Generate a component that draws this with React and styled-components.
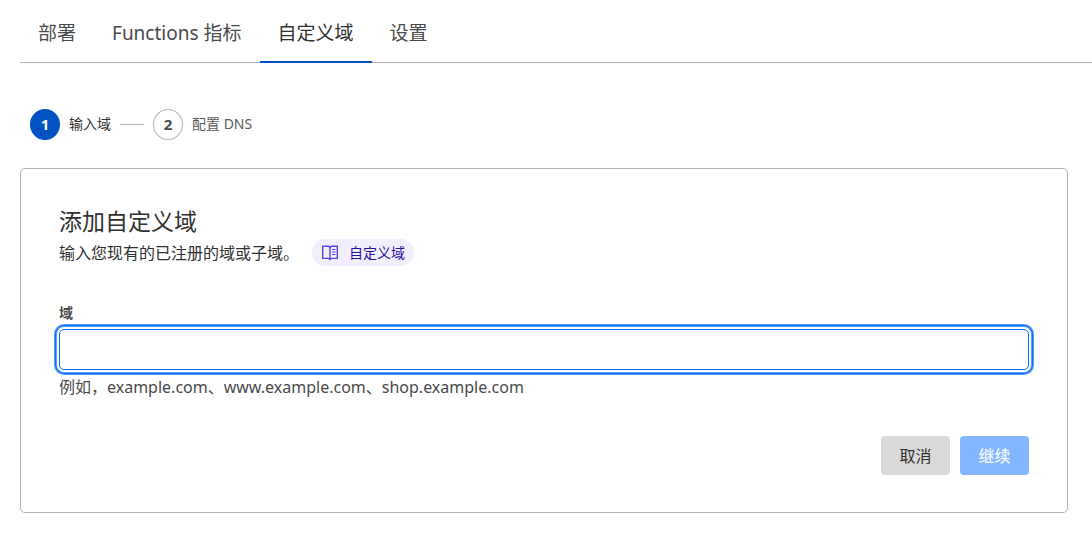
import React, { useState } from "react";
import styled, { createGlobalStyle } from "styled-components";

const GlobalStyle = createGlobalStyle`
  * {
    box-sizing: border-box;
  }
  body {
    margin: 0;
    background: #fff;
    color: #313131;
    font-family: "Noto Sans", "Noto Sans CJK SC", sans-serif;
    font-size: 16px;
    line-height: 24px;
  }
  button,
  input {
    font-family: inherit;
  }
`;

const Page = styled.div`
  padding-left: 20px;
`;

const Tabs = styled.nav`
  display: flex;
  height: 63px;
  border-bottom: 1px solid #b5b5b5;
`;

const Tab = styled.a`
  display: flex;
  align-items: center;
  height: 63px;
  padding: 4px 18px 0;
  border-bottom: 2px solid ${({ $active }) => ($active ? "#0051c3" : "transparent")};
  color: ${({ $active }) => ($active ? "#313131" : "#4a4a4a")};
  font-size: 19px;
  font-weight: 400;
  text-decoration: none;
  white-space: nowrap;
`;

const Content = styled.main`
  padding-right: 24px;
`;

const Steps = styled.ol`
  display: flex;
  align-items: center;
  margin: 46px 0 28px;
  padding: 0 10px;
  list-style: none;
`;

const Step = styled.li`
  display: flex;
  align-items: center;
  gap: 9px;
  color: ${({ $current }) => ($current ? "#313131" : "#595959")};
  font-size: 14px;

  &:not(:first-child)::before {
    content: "";
    width: 24px;
    height: 1px;
    margin-left: 9px;
    background: #b5b5b5;
  }
`;

const StepNumber = styled.span`
  display: flex;
  align-items: center;
  justify-content: center;
  width: 30px;
  height: 31px;
  padding-bottom: 2px;
  border: 1px solid ${({ $current }) => ($current ? "#0051c3" : "#b5b5b5")};
  border-radius: 50%;
  background: ${({ $current }) => ($current ? "#0051c3" : "#fff")};
  color: ${({ $current }) => ($current ? "#fff" : "#4a4a4a")};
  font-size: 15px;
  font-weight: 700;
`;

const StepName = styled.span`
  padding-bottom: 2px;
`;

const Card = styled.form`
  padding: 36px 38px 37px;
  border: 1px solid #b5b5b5;
  border-radius: 5px;
`;

const Title = styled.h1`
  margin: 0 0 2px;
  font-size: 23px;
  font-weight: 400;
  line-height: 32px;
`;

const Intro = styled.div`
  display: flex;
  align-items: center;
  gap: 13px;
`;

const Description = styled.p`
  margin: 0;
`;

const DocsLink = styled.a`
  display: flex;
  align-items: center;
  gap: 10px;
  height: 27px;
  padding: 0 9px;
  border-radius: 14px;
  background: #f1eefd;
  color: #2c0fa0;
  font-size: 14px;
  text-decoration: none;
`;

const Label = styled.label`
  display: block;
  margin-top: 37px;
  color: #4a4a4a;
  font-size: 14px;
  font-weight: 600;
  line-height: 20px;
`;

const TextInput = styled.input`
  display: block;
  width: 100%;
  height: 41px;
  margin: 6px 0 5px;
  padding: 0 10px;
  border: 1px solid #b5b5b5;
  border-radius: 5px;
  background: #fff;
  color: #313131;
  font-size: 16px;
  outline: none;
  caret-color: transparent;

  &:focus {
    border-color: #056dff;
    box-shadow: 0 0 0 2px #fff, 0 0 0 3px #5a9fff, 0 0 0 4px #056dff, 0 0 0 5px #5a9fff;
  }
`;

const Hint = styled.p`
  margin: 0;
  color: #4a4a4a;
`;

const Actions = styled.div`
  display: flex;
  justify-content: flex-end;
  gap: 10px;
  margin-top: 37px;
`;

const Button = styled.button`
  min-width: 69px;
  height: 39px;
  padding: 0 18px 2px;
  border: 0;
  border-radius: 4px;
  background: ${({ $primary }) => ($primary ? "#82b6ff" : "#d9d9d9")};
  color: ${({ $primary }) => ($primary ? "#f2f7ff" : "#313131")};
  font-size: 16px;
  font-weight: ${({ $primary }) => ($primary ? 500 : 400)};
  cursor: pointer;
`;

const BookIcon = () => (
  <svg width="18" height="16" viewBox="0 0 18 16" fill="none" stroke="#5a43e0" aria-hidden="true">
    <path d="M9 2.2C8.4 1.5 7.6 1.2 6.7 1.2H1.7v12.2h5c.9 0 1.7.2 2.3.9.6-.7 1.4-.9 2.3-.9h5V1.2h-5c-.9 0-1.7.3-2.3 1z" strokeWidth="1.4" />
    <path d="M9 2v12.5" strokeWidth="1.4" />
    <path d="M11 4.5h3.5M11 7h3.5M11 9.5h3.5" strokeWidth="1" />
  </svg>
);

const tabs = ["部署", "Functions 指标", "自定义域", "设置"];
const steps = ["输入域", "配置 DNS"];

const App = () => {
  const [domain, setDomain] = useState("");

  return (
    <Page>
      <GlobalStyle />
      <Tabs>
        {tabs.map((tab) => (
          <Tab key={tab} href="#" $active={tab === "自定义域"}>
            {tab}
          </Tab>
        ))}
      </Tabs>
      <Content>
        <Steps>
          {steps.map((step, index) => (
            <Step key={step} $current={index === 0}>
              <StepNumber $current={index === 0}>{index + 1}</StepNumber>
              <StepName>{step}</StepName>
            </Step>
          ))}
        </Steps>
        <Card onSubmit={(e) => e.preventDefault()}>
          <Title>添加自定义域</Title>
          <Intro>
            <Description>输入您现有的已注册的域或子域。</Description>
            <DocsLink href="#">
              <BookIcon />
              自定义域
            </DocsLink>
          </Intro>
          <Label htmlFor="domain">域</Label>
          <TextInput
            id="domain"
            type="text"
            autoFocus
            value={domain}
            onChange={(e) => setDomain(e.target.value)}
          />
          <Hint>例如，example.com、www.example.com、shop.example.com</Hint>
          <Actions>
            <Button type="button">取消</Button>
            <Button type="submit" $primary>
              继续
            </Button>
          </Actions>
        </Card>
      </Content>
    </Page>
  );
};

export default App;
